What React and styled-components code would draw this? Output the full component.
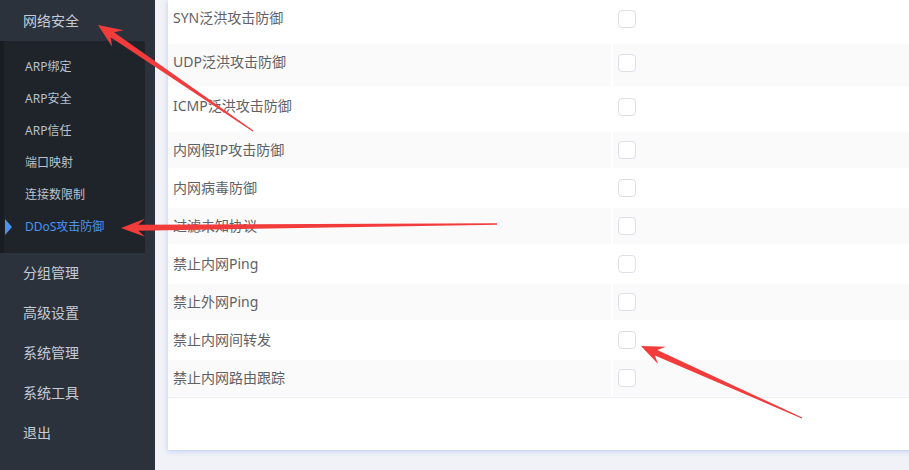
import React from "react";
import styled, { createGlobalStyle } from "styled-components";

const GlobalStyle = createGlobalStyle`
	html, body {
		margin: 0;
		padding: 0;
		height: 100%;
		overflow: hidden;
	}
	body {
		font-family: "Noto Sans", "Noto Sans CJK SC", sans-serif;
	}
`;

const subMenu = ["ARP绑定", "ARP安全", "ARP信任", "端口映射", "连接数限制", "DDoS攻击防御"];
const menu = ["分组管理", "高级设置", "系统管理", "系统工具", "退出"];

const rules = [
	{ name: "SYN泛洪攻击防御", tall: true },
	{ name: "UDP泛洪攻击防御", tall: true },
	{ name: "ICMP泛洪攻击防御", tall: true },
	{ name: "内网假IP攻击防御" },
	{ name: "内网病毒防御" },
	{ name: "过滤未知协议" },
	{ name: "禁止内网Ping" },
	{ name: "禁止外网Ping" },
	{ name: "禁止内网间转发" },
	{ name: "禁止内网路由跟踪" },
];

// snipping-tool style arrow: thin tail, fat head
function arrowPoints(tip, tail, headLen, headW, w0, w1) {
	const dx = tip[0] - tail[0];
	const dy = tip[1] - tail[1];
	const len = Math.hypot(dx, dy);
	const ux = dx / len;
	const uy = dy / len;
	const nx = -uy;
	const ny = ux;
	const at = (d, off) => [tip[0] - ux * d + nx * off, tip[1] - uy * d + ny * off];
	const pts = [
		[tail[0] + nx * w0 / 2, tail[1] + ny * w0 / 2],
		at(headLen * 0.72, w1 / 2),
		at(headLen, headW / 2),
		tip,
		at(headLen, -headW / 2),
		at(headLen * 0.72, -w1 / 2),
		[tail[0] - nx * w0 / 2, tail[1] - ny * w0 / 2],
	];
	return pts.map((p) => p[0].toFixed(1) + "," + p[1].toFixed(1)).join(" ");
}

const arrows = [
	{ tip: [98, 25], tail: [253, 131], headLen: 24, headW: 20, w0: 1, w1: 6 },
	{ tip: [121, 228], tail: [497, 224], headLen: 24, headW: 18, w0: 1.5, w1: 6 },
	{ tip: [641, 346], tail: [802, 418], headLen: 23, headW: 19, w0: 1, w1: 6 },
];

export default function App() {
	return (
		<Page>
			<GlobalStyle />
			<Sidebar>
				<TopItem>网络安全</TopItem>
				<SubMenu>
					{subMenu.map((s, i) => (
						<SubItem key={s} active={i === subMenu.length - 1}>
							{s}
						</SubItem>
					))}
				</SubMenu>
				{menu.map((m) => (
					<MenuItem key={m}>{m}</MenuItem>
				))}
			</Sidebar>
			<Main>
				<Card>
					<Table>
						{rules.map((r, i) => (
							<Row key={r.name}>
								<LabelCell striped={i % 2 === 1} tall={r.tall}>
									{r.name}
								</LabelCell>
								<CheckCell striped={i % 2 === 1} tall={r.tall}>
									<Check />
								</CheckCell>
							</Row>
						))}
					</Table>
				</Card>
			</Main>
			<Overlay width="909" height="470" viewBox="0 0 909 470">
				{arrows.map((a, i) => (
					<polygon
						key={i}
						fill="#f23b3b"
						points={arrowPoints(a.tip, a.tail, a.headLen, a.headW, a.w0, a.w1)}
					/>
				))}
			</Overlay>
		</Page>
	);
}

const Page = styled.div`
	position: relative;
	display: flex;
	width: 100vw;
	height: 100vh;
	overflow: hidden;
`;

const Sidebar = styled.div`
	width: 155px;
	flex-shrink: 0;
	background-color: #2b323c;
	display: flex;
	flex-direction: column;
`;

const TopItem = styled.div`
	height: 41px;
	line-height: 40px;
	padding-left: 23px;
	font-size: 14px;
	color: #c6ccd5;
	font-family: "Noto Sans CJK SC", sans-serif;
`;

const SubMenu = styled.div`
	width: 141px;
	background-color: #1f242b;
	border-left: 4px solid #191d22;
	padding: 10px 0;
`;

const SubItem = styled.div`
	position: relative;
	height: 32px;
	line-height: 32px;
	padding-left: 21px;
	font-size: 12px;
	color: ${(props) => (props.active ? "#4a93ef" : "#b9c2cd")};
	font-family: "Noto Sans", "Noto Sans CJK SC", sans-serif;
	&::before {
		content: "";
		display: ${(props) => (props.active ? "block" : "none")};
		position: absolute;
		left: 1px;
		top: 8px;
		border-top: 8px solid transparent;
		border-bottom: 8px solid transparent;
		border-left: 7px solid #4a93ef;
	}
`;

const MenuItem = styled.div`
	height: 40px;
	line-height: 38px;
	padding-left: 23px;
	font-size: 14px;
	color: #c6ccd5;
	font-family: "Noto Sans CJK SC", sans-serif;
`;

const Main = styled.div`
	flex: 1;
	background-color: #f0f2f7;
	padding-left: 13px;
	overflow: hidden;
`;

const Card = styled.div`
	width: 820px;
	height: 450px;
	box-sizing: border-box;
	background-color: #fff;
	box-shadow: 0 1px 5px rgba(80, 120, 240, 0.35);
`;

const Table = styled.div`
	display: flex;
	flex-direction: column;
	gap: 2px;
	padding-bottom: 1px;
	border-bottom: 1px solid #eceef3;
`;

const Row = styled.div`
	display: flex;
	gap: 2px;
`;

const LabelCell = styled.div`
	box-sizing: border-box;
	width: 443px;
	height: ${(props) => (props.tall ? "42px" : "36px")};
	padding: 0 0 ${(props) => (props.tall ? "8px" : "2px")} 5px;
	display: flex;
	align-items: center;
	background-color: ${(props) => (props.striped ? "#fafafa" : "#fff")};
	font-size: 14px;
	color: #5f6166;
	font-family: "Noto Sans", "Noto Sans CJK SC", sans-serif;
`;

const CheckCell = styled.div`
	box-sizing: border-box;
	flex: 1;
	height: ${(props) => (props.tall ? "42px" : "36px")};
	padding: 0 0 ${(props) => (props.tall ? "5px" : "0")} 5px;
	display: flex;
	align-items: center;
	background-color: ${(props) => (props.striped ? "#fafafa" : "#fff")};
`;

const Check = styled.span`
	box-sizing: border-box;
	width: 18px;
	height: 18px;
	border: 1px solid #dcdfe6;
	border-radius: 4px;
	background-color: #fff;
`;

const Overlay = styled.svg`
	position: absolute;
	left: 0;
	top: 0;
	pointer-events: none;
`;
